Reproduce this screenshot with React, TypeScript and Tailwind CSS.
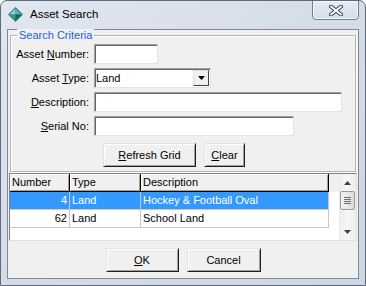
import { ReactNode } from 'react';

const font = { fontFamily: '"Liberation Sans", Arial, sans-serif' };

function Key({ children }: { children: ReactNode }) {
  return <span className="underline underline-offset-[1px]">{children}</span>;
}

function Field({ label, width, children }: { label: ReactNode; width: string; children?: ReactNode }) {
  return (
    <div className="flex items-center h-[20px]">
      <label className="w-[79px] text-right pr-[1px]">{label}</label>
      <div className={`ml-[4px] h-full bg-white border border-t-[#a0a0a0] border-l-[#a0a0a0] border-r-[#e3e3e3] border-b-[#e3e3e3] shadow-[inset_1px_1px_0_#696969] flex items-center ${width}`}>
        {children}
      </div>
    </div>
  );
}

function Button({ children, className = '' }: { children: ReactNode; className?: string }) {
  return (
    <button className={`h-[24px] bg-[#f0f0f0] border border-t-[#e3e3e3] border-l-[#e3e3e3] border-r-[#202020] border-b-[#202020] shadow-[inset_1px_1px_0_#fff,inset_-1px_-1px_0_#a0a0a0] flex items-center justify-center text-black ${className}`}>
      {children}
    </button>
  );
}

const rows = [
  { num: 4, type: 'Land', desc: 'Hockey & Football Oval', selected: true },
  { num: 62, type: 'Land', desc: 'School Land', selected: false },
];

export default function App() {
  return (
    <div
      style={font}
      className="w-[366px] h-[286px] text-[11px] text-black border border-[#5d6b7d] rounded-t-[7px] bg-gradient-to-br from-[#e1e7f0] via-[#d4dce8] to-[#cdd6e3] overflow-hidden"
    >
      {/* title bar */}
      <div className="h-[28px] flex items-start relative">
        <svg width="15" height="15" viewBox="0 0 15 15" className="mt-[6px] ml-[7px]">
          <polygon points="7.5,0 15,7.5 7.5,15 0,7.5" fill="#2f7f7a" />
          <polygon points="7.5,1.5 7.5,7.5 1.5,7.5" fill="#8fd6cc" />
          <polygon points="7.5,1.5 13.5,7.5 7.5,7.5" fill="#5bb5aa" />
          <polygon points="1.5,7.5 7.5,7.5 7.5,13.5" fill="#3e978e" />
          <polygon points="7.5,7.5 13.5,7.5 7.5,13.5" fill="#1f5f5b" />
        </svg>
        <span className="ml-[7px] mt-[6px] text-[11.5px] leading-[14px]">Asset Search</span>
        <div className="ml-auto mr-[6px] -mt-[1px] w-[47px] h-[20px] rounded-b-[4px] border border-[#6f7e91] bg-gradient-to-b from-[#e6ecf3] to-[#d3dce8] shadow-[inset_0_0_0_1px_#f4f7fb] flex items-center justify-center">
          <svg width="14" height="11" viewBox="0 0 14 11">
            <path d="M2 1.5 L12 9.5 M12 1.5 L2 9.5" stroke="#3c4656" strokeWidth="4" strokeLinecap="round" />
            <path d="M2 1.5 L12 9.5 M12 1.5 L2 9.5" stroke="#ffffff" strokeWidth="2" strokeLinecap="round" />
          </svg>
        </div>
      </div>

      {/* client area */}
      <div className="ml-[6px] w-[352px] h-[250px] border border-[#7d8a9a] bg-[#f0f0f0] flex flex-col">
        {/* group box */}
        <div className="relative mt-[5px] ml-[2px] w-[346px] h-[137px] border border-[#b4b4b4] shadow-[inset_1px_1px_0_#fff,1px_1px_0_#fff] pt-[8px]">
          <span className="absolute -top-[7px] left-[6px] px-[2px] bg-[#f0f0f0] text-[#1f5fd6] leading-[13px]">Search Criteria</span>
          <div className="flex flex-col gap-[4px]">
            <Field label={<>Asset <Key>N</Key>umber:</>} width="w-[64px]" />
            <Field label={<>Asset <Key>T</Key>ype:</>} width="w-[117px]">
              <span className="pl-[1px] flex-1">Land</span>
              <div className="w-[16px] h-[16px] mr-[1px] bg-[#f0f0f0] border border-t-[#e3e3e3] border-l-[#e3e3e3] border-r-[#404040] border-b-[#404040] flex items-center justify-center">
                <svg width="7" height="4" viewBox="0 0 7 4"><polygon points="0,0 7,0 3.5,4" fill="#000" /></svg>
              </div>
            </Field>
            <Field label={<><Key>D</Key>escription:</>} width="w-[248px]" />
            <Field label={<><Key>S</Key>erial No:</>} width="w-[200px]" />
          </div>
          <div className="flex gap-[8px] mt-[7px] pl-[92px]">
            <Button className="w-[93px]"><Key>R</Key>efresh Grid</Button>
            <Button className="w-[41px]"><Key>C</Key>lear</Button>
          </div>
        </div>

        {/* grid */}
        <div className="ml-[1px] mt-[1px] w-[348px] h-[68px] bg-white border border-t-[#828282] border-l-[#828282] border-r-[#e3e3e3] border-b-[#e3e3e3] flex">
          <div className="flex-1">
            <div className="flex h-[18px] bg-[#f0f0f0]">
              {['Number', 'Type', 'Description'].map((h, i) => (
                <div
                  key={h}
                  className={`h-full pl-[2px] flex items-center border-r border-b border-black shadow-[inset_1px_1px_0_#fff,inset_-1px_-1px_0_#a0a0a0] ${i === 0 ? 'w-[60px]' : i === 1 ? 'w-[71px]' : 'w-[188px]'}`}
                >
                  {h}
                </div>
              ))}
            </div>
            {rows.map((r) => (
              <div key={r.num} className={`flex h-[18px] w-[319px] ${r.selected ? 'bg-[#3399ff] text-white' : 'text-black'}`}>
                <div className="w-[60px] h-full pr-[2px] flex items-center justify-end border-r border-b border-[#c8c8c8]">{r.num}</div>
                <div className="w-[71px] h-full pl-[2px] flex items-center border-r border-b border-[#c8c8c8]">{r.type}</div>
                <div className="w-[188px] h-full pl-[2px] flex items-center border-r border-b border-[#c8c8c8]">{r.desc}</div>
              </div>
            ))}
          </div>
          {/* scrollbar */}
          <div className="w-[17px] h-full bg-gradient-to-r from-[#ececec] via-[#f7f7f7] to-[#ececec] flex flex-col items-center">
            <div className="h-[17px] flex items-center justify-center">
              <svg width="7" height="4" viewBox="0 0 7 4"><polygon points="0,4 7,4 3.5,0" fill="#404040" /></svg>
            </div>
            <div className="w-[15px] h-[19px] rounded-[2px] border border-[#9a9a9a] bg-gradient-to-r from-[#f2f2f2] to-[#dcdcdc] flex flex-col items-center justify-center gap-[1px]">
              <div className="w-[7px] h-[1px] bg-[#6e6e6e]" />
              <div className="w-[7px] h-[1px] bg-[#6e6e6e]" />
              <div className="w-[7px] h-[1px] bg-[#6e6e6e]" />
              <div className="w-[7px] h-[1px] bg-[#6e6e6e]" />
            </div>
            <div className="flex-1" />
            <div className="h-[17px] flex items-center justify-center">
              <svg width="7" height="4" viewBox="0 0 7 4"><polygon points="0,0 7,0 3.5,4" fill="#404040" /></svg>
            </div>
          </div>
        </div>

        {/* dialog buttons */}
        <div className="flex justify-center gap-[8px] mt-[7px]">
          <Button className="w-[73px]"><Key>O</Key>K</Button>
          <Button className="w-[74px]">Cancel</Button>
        </div>
      </div>
    </div>
  );
}
